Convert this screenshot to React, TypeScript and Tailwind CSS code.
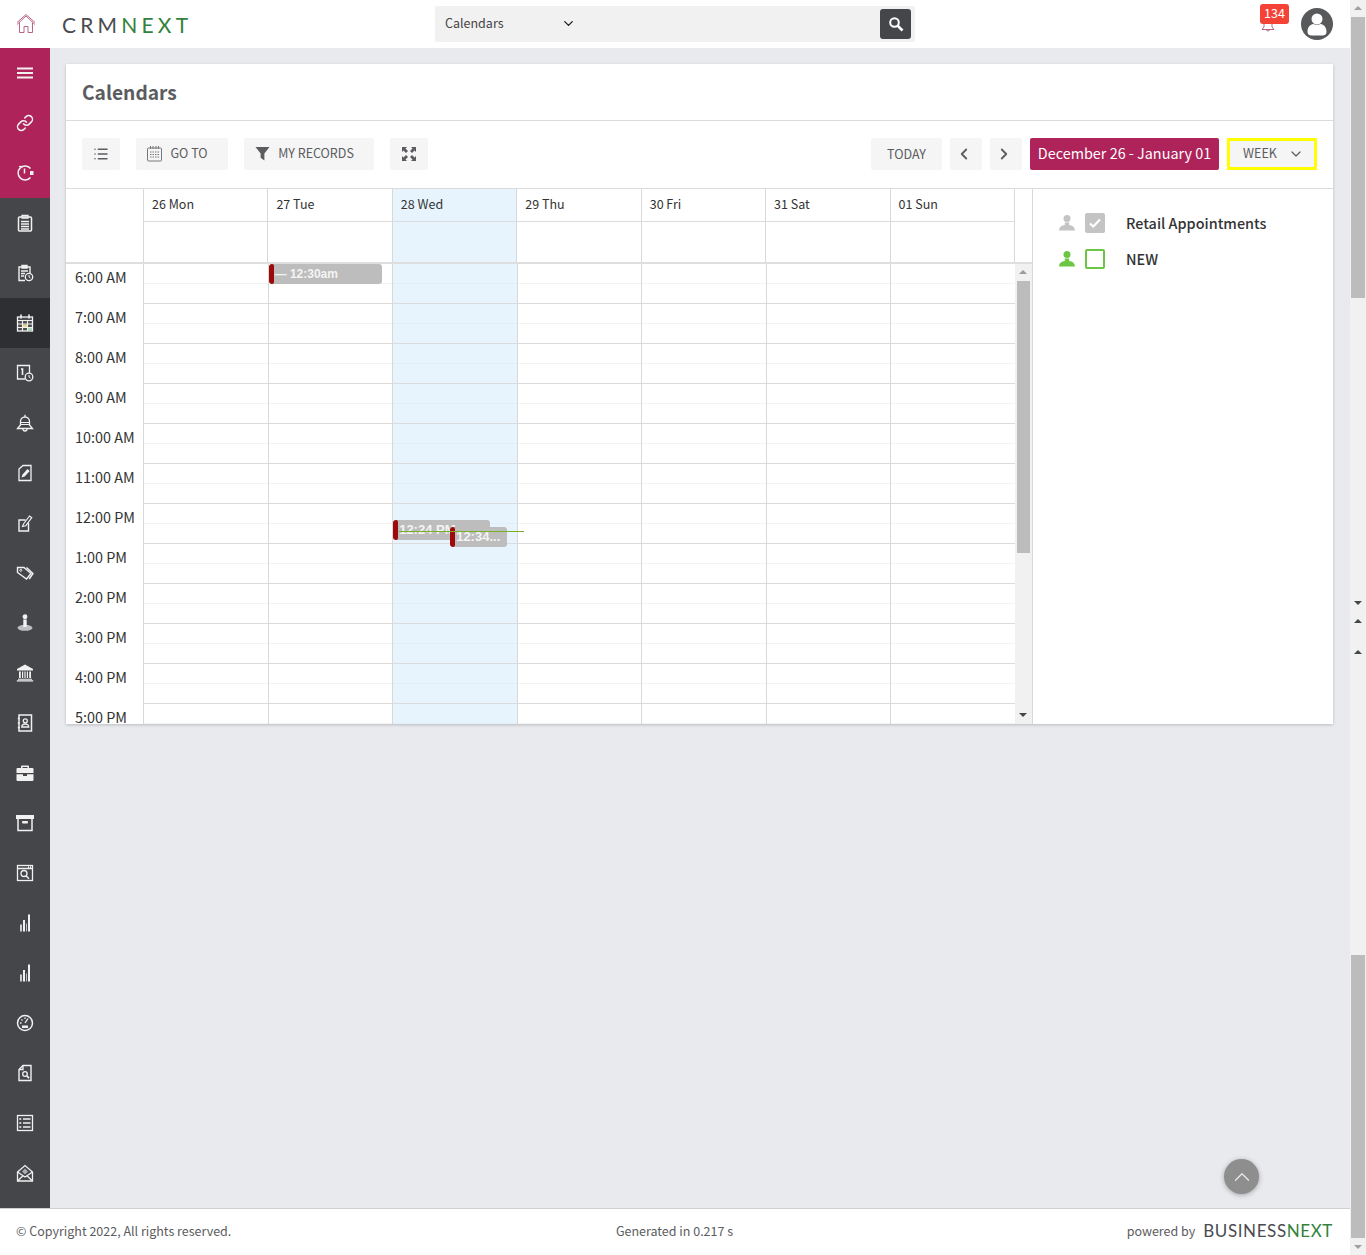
import { ChevronDown, ChevronLeft, ChevronRight, ChevronUp, Link, List } from 'lucide-react';
import type { ReactNode } from 'react';

const DAYS = ['26 Mon', '27 Tue', '28 Wed', '29 Thu', '30 Fri', '31 Sat', '01 Sun'];
const HOURS = ['6:00 AM', '7:00 AM', '8:00 AM', '9:00 AM', '10:00 AM', '11:00 AM', '12:00 PM', '1:00 PM', '2:00 PM', '3:00 PM', '4:00 PM', '5:00 PM'];

function Svg({ children, size = 18 }: { children: ReactNode; size?: number }) {
  return (
    <svg width={size} height={size} viewBox="0 0 18 18" fill="none" stroke="currentColor" strokeWidth="1.3">
      {children}
    </svg>
  );
}

function Hamburger() {
  return (
    <Svg>
      <path d="M1 4.500h16M1 9h16M1 13.500h16" strokeWidth="2" />
    </Svg>
  );
}

function Stopwatch() {
  return (
    <Svg>
      <path d="M14.500 4.500a7 7 0 1 0 0 9" strokeWidth="1.500" />
      <path d="M8.500 4.500v5" strokeWidth="1.500" />
      <path d="M3 2.500h4" strokeWidth="1.200" />
      <rect x="14" y="7" width="3.500" height="4" fill="currentColor" stroke="none" />
    </Svg>
  );
}

function Clipboard() {
  return (
    <Svg>
      <rect x="2.500" y="3" width="13" height="14" rx="1" strokeWidth="1.500" />
      <path d="M6 1.500h6v2.500H6zM5 7.500h8M5 10h8M5 12.500h8M5 15h8" />
    </Svg>
  );
}

function ClipboardClock() {
  return (
    <Svg>
      <path d="M9 16.500H3V3h11v6M6 1.500h5V4H6zM5 7h7M5 9.500h4M5 12h3" strokeWidth="1.400" />
      <circle cx="13" cy="13" r="3.700" />
      <path d="M13 11v2l1.500 1" strokeWidth="1" />
    </Svg>
  );
}

function CalendarGrid() {
  return (
    <Svg>
      <rect x="1.500" y="3" width="15" height="14" fill="currentColor" fillOpacity="0.15" />
      <path d="M5 .5v4M13 .5v4" strokeWidth="1.600" />
      <path d="M1.500 6.500h15M1.500 10h15M1.500 13.500h15M6.500 6.500V17M11.500 6.500V17" strokeWidth="1.100" />
      <rect x="7" y="10.500" width="4" height="2.500" fill="#e8d98a" stroke="none" />
      <rect x="12" y="14" width="4" height="2.500" fill="#a8d8c0" stroke="none" />
    </Svg>
  );
}

function CalendarClock() {
  return (
    <Svg>
      <path d="M9 15H1.500V1.500h12V9" />
      <path d="M5 5h1.500v6" strokeWidth="1.600" />
      <circle cx="13" cy="13" r="3.800" />
      <path d="M13 11v2l1.500 1" strokeWidth="1" />
    </Svg>
  );
}

function BandBell() {
  return (
    <Svg>
      <path d="M9 .8v1.700M4.500 11V7.500a4.500 4.500 0 0 1 9 0V11l3 3.500h-15z" strokeWidth="1.300" />
      <path d="M4.500 8.500h9M4.500 10.500h9" strokeWidth="1" />
      <path d="M7 15a2 2 0 0 0 4 0" />
    </Svg>
  );
}

function DocPencil() {
  return (
    <Svg>
      <path d="M3 5L7 1.500h8v15H3z" strokeWidth="1.300" />
      <path d="M5.500 13.500l1-3 5-5.500 2.200 2-5 5.500z" fill="currentColor" stroke="none" />
    </Svg>
  );
}

function BoxPencil() {
  return (
    <Svg>
      <path d="M12.500 9v8H3V6h6.500" strokeWidth="1.400" />
      <path d="M6.500 12.500l1-2.500 6-8 2.300 1.700-6 8z" strokeWidth="1.100" />
    </Svg>
  );
}

function TagPair() {
  return (
    <Svg>
      <path d="M1.500 3.500h6.500l7 6-4.500 5.500-9-6.500z" strokeWidth="1.400" />
      <path d="M10.500 3.500l6.500 6-3.800 5.500" strokeWidth="1.400" />
      <circle cx="4.800" cy="6.300" r="1" strokeWidth="1" />
    </Svg>
  );
}

function PersonBase() {
  return (
    <Svg>
      <circle cx="9" cy="2.800" r="1.800" fill="currentColor" />
      <path d="M7.300 5.500h3.400v7.500H7.300z" fill="currentColor" stroke="none" />
      <ellipse cx="9" cy="13.800" rx="7.500" ry="3" fill="currentColor" fillOpacity="0.7" stroke="none" />
    </Svg>
  );
}

function Bank() {
  return (
    <svg width="18" height="18" viewBox="0 0 18 18" fill="currentColor">
      <path d="M9 .5l8 4.500v1.500H1V5z" />
      <path d="M3 7.500h1.800v6.500H3zM6 7.500h1.200v6.500H6zM8.400 7.500h1.200v6.500H8.400zM10.800 7.500H12v6.500h-1.200zM13.200 7.500H15v6.500h-1.800z" />
      <path d="M2 14.800h14v1H2zM.8 16.300h16.400v1.200H.8z" />
    </svg>
  );
}

function ContactBook() {
  return (
    <Svg>
      <rect x="3" y="1" width="12.500" height="16" strokeWidth="1.500" />
      <circle cx="9.300" cy="6.800" r="2" />
      <path d="M5.800 13c0-4 7-4 7 0zM1.800 4.500h2M1.800 9h2M1.800 13.500h2" />
    </Svg>
  );
}

function Case() {
  return (
    <svg width="18" height="18" viewBox="0 0 18 18" fill="currentColor">
      <path fillRule="evenodd" d="M6 1.500h6a1 1 0 0 1 1 1V4h3.500a1 1 0 0 1 1 1v4H.5V5a1 1 0 0 1 1-1H5V2.500a1 1 0 0 1 1-1zM6.500 3v1h5V3z" />
      <path d="M.5 10.200H7v1.800h4v-1.800h6.500V16a1 1 0 0 1-1 1h-15a1 1 0 0 1-1-1z" />
    </svg>
  );
}

function ArchiveBox() {
  return (
    <svg width="18" height="18" viewBox="0 0 18 18" fill="none" stroke="currentColor">
      <rect x=".5" y="1.500" width="17" height="3" fill="currentColor" />
      <path d="M2 4.500V16.500h14V4.500" strokeWidth="1.500" />
      <rect x="6" y="7" width="6" height="2.600" rx="1" fill="currentColor" stroke="none" />
    </svg>
  );
}

function SearchWindow() {
  return (
    <Svg>
      <rect x="1.500" y="1.500" width="15" height="15" />
      <path d="M1.500 4.500h15M12 3h1M14 3h1" />
      <circle cx="8" cy="9.500" r="3" />
      <path d="M10 11.800l3 3" strokeWidth="1.500" />
    </Svg>
  );
}

function Bars() {
  return (
    <svg width="18" height="18" viewBox="0 0 18 18" fill="currentColor">
      <rect x="4" y="10.500" width="2" height="7" fillOpacity="0.8" />
      <rect x="7" y="6" width="2" height="11.500" />
      <rect x="10" y="9.500" width="1" height="8" fillOpacity="0.7" />
      <rect x="12" y=".5" width="2" height="17" />
    </svg>
  );
}

function Dial() {
  return (
    <Svg>
      <circle cx="9" cy="9" r="7.500" strokeWidth="1.500" />
      <path d="M9 9l3-4.500M4 9h1.500M5.500 5.500l1 1M9 3.500v1.500" />
      <rect x="6" y="11.500" width="6" height="2.500" fill="currentColor" stroke="none" />
    </Svg>
  );
}

function FileLens() {
  return (
    <Svg>
      <path d="M3 5.500L7 1.500h8v15H3z" strokeWidth="1.400" />
      <path d="M7 1.500v4H3" />
      <circle cx="9" cy="10" r="2.300" strokeWidth="1.300" />
      <path d="M10.800 11.800l2.300 2.300" strokeWidth="1.700" />
    </Svg>
  );
}

function Checklist() {
  return (
    <Svg>
      <rect x="1.500" y="1.500" width="15" height="15" />
      <path d="M7 5h7.500M7 9h7.500M7 13h7.500M3.300 5h2M3.300 9h2M3.300 13h2" strokeWidth="1.600" />
    </Svg>
  );
}

function MailOpen() {
  return (
    <Svg>
      <path d="M1.500 8L9 1.500 16.500 8v9h-15z" strokeWidth="1.300" />
      <path d="M1.500 8L9 13l7.500-5M1.500 17L7 11.800M16.500 17L11 11.800" />
      <path d="M9 4.500l3 3-3 3-3-3z" fill="currentColor" fillOpacity="0.6" stroke="none" />
    </Svg>
  );
}

function PersonGlyph({ className }: { className: string }) {
  return (
    <svg className={className} width="18" height="18" viewBox="0 0 18 18" fill="currentColor">
      <circle cx="9" cy="4.500" r="3.500" />
      <path d="M6.800 8.500h4.400v2.500c3 .5 5.500 1.800 5.800 5.500H1c.3-3.700 2.800-5 5.800-5.500z" />
    </svg>
  );
}

const NAV: { icon: ReactNode; tone: 'pink' | 'dark' | 'active' }[] = [
  { icon: <Hamburger />, tone: 'pink' },
  { icon: <Link size={18} strokeWidth={2} />, tone: 'pink' },
  { icon: <Stopwatch />, tone: 'pink' },
  { icon: <Clipboard />, tone: 'dark' },
  { icon: <ClipboardClock />, tone: 'dark' },
  { icon: <CalendarGrid />, tone: 'active' },
  { icon: <CalendarClock />, tone: 'dark' },
  { icon: <BandBell />, tone: 'dark' },
  { icon: <DocPencil />, tone: 'dark' },
  { icon: <BoxPencil />, tone: 'dark' },
  { icon: <TagPair />, tone: 'dark' },
  { icon: <PersonBase />, tone: 'dark' },
  { icon: <Bank />, tone: 'dark' },
  { icon: <ContactBook />, tone: 'dark' },
  { icon: <Case />, tone: 'dark' },
  { icon: <ArchiveBox />, tone: 'dark' },
  { icon: <SearchWindow />, tone: 'dark' },
  { icon: <Bars />, tone: 'dark' },
  { icon: <Bars />, tone: 'dark' },
  { icon: <Dial />, tone: 'dark' },
  { icon: <FileLens />, tone: 'dark' },
  { icon: <Checklist />, tone: 'dark' },
  { icon: <MailOpen />, tone: 'dark' },
];

function Sidebar() {
  return (
    <aside className="w-[50px] shrink-0 bg-[#45464a] text-[#f1f1f1]">
      {NAV.map((item, i) => (
        <div
          key={i}
          className={
            'flex h-[50px] items-center justify-center ' +
            (item.tone === 'pink' ? 'bg-[#ae2359]' : item.tone === 'active' ? 'bg-[#2e2f33]' : 'bg-[#45464a]')
          }
        >
          {item.icon}
        </div>
      ))}
    </aside>
  );
}

function Header() {
  return (
    <header className="flex h-[48px] shrink-0 items-center bg-white">
      <svg className="ml-4" width="20" height="20" viewBox="0 0 20 20" fill="none" stroke="#b0567d" strokeWidth="0.900">
        <path d="M1 10.500L10 2l9 8.500M3.500 8.500V18.500h4.500v-6h4v6h4.500V8.500M1 8.500L10 .5l9 8" />
      </svg>
      <div className="ml-[26px] w-[130px] whitespace-nowrap font-['Lato'] text-[21px] leading-none tracking-[0.2em] text-[#4a4b4f]">
        CRM<span className="text-[#33823c]">NEXT</span>
      </div>
      <div className="ml-[243px] flex h-[36px] w-[480px] items-center rounded-[2px] bg-[#f1f1f1] pr-1">
        <div className="flex w-[146px] items-center justify-between pb-[2px] pl-[10px] pr-[5px] text-[12.5px] text-[#444]">
          Calendars
          <ChevronDown size={15} strokeWidth={2.2} className="text-[#222]" />
        </div>
        <div className="flex-1" />
        <div className="flex h-[30px] w-[31px] items-center justify-center rounded-[3px] bg-[#45464a]">
          <svg width="16" height="16" viewBox="0 0 16 16" fill="none" stroke="#fff">
            <circle cx="6.500" cy="6.500" r="4.300" strokeWidth="2" />
            <path d="M9.800 9.800l4.700 4.700" strokeWidth="2.600" />
          </svg>
        </div>
      </div>
      <div className="relative ml-[345px] flex h-[40px] w-[30px] items-center justify-center">
        <svg className="mt-[4px] -ml-[14px]" width="14" height="14" viewBox="0 0 14 14" fill="none" stroke="#a5426b" strokeWidth="0.800">
          <path d="M3 8V5a4 4 0 0 1 8 0v3l2 2.500H1zM5.500 10.500a1.500 1.500 0 0 0 3 0" />
        </svg>
        <div className="absolute left-0 top-0 flex h-[20px] w-[29px] items-center justify-center rounded-[3px] bg-[#f44336] pb-px text-[12.5px] text-white">
          134
        </div>
      </div>
      <div className="ml-[11px] flex h-[32px] w-[32px] items-center justify-center overflow-hidden rounded-full bg-[#58595b]">
        <svg width="32" height="32" viewBox="0 0 32 32" fill="#fff">
          <circle cx="16" cy="11" r="5.500" />
          <path d="M6.500 24c0-5 2.500-7.500 6-8 2 1.300 5 1.300 7 0 3.500.5 6 3 6 8 0 2.500-2 3.500-4 3.500H10.500c-2 0-4-1-4-3.500z" />
        </svg>
      </div>
    </header>
  );
}

function ToolButton({ className, children }: { className: string; children: ReactNode }) {
  return (
    <div className={'flex h-[32px] items-center justify-center rounded-[2px] bg-[#f5f5f5] text-[12.5px] text-[#5b5c60] ' + className}>
      {children}
    </div>
  );
}

function Toolbar() {
  return (
    <div className="flex h-[68px] items-center border-b border-[#dcdcdc] px-4 pb-[2px]">
      <ToolButton className="w-[38px]">
        <List size={16} strokeWidth={2.2} />
      </ToolButton>
      <ToolButton className="ml-4 w-[92px] gap-2 pr-[9px]">
        <svg width="15" height="16" viewBox="0 0 15 16" fill="none" stroke="#77787b" strokeWidth="1">
          <rect x=".5" y="2" width="14" height="13" rx="1" />
          <path d="M3.500 0v3M6 0v3M9 0v3M11.500 0v3" />
          <path d="M3 6h9M3 8.500h9M3 11h9" strokeWidth="1.200" strokeDasharray="1.500 1" />
        </svg>
        <span>GO TO</span>
      </ToolButton>
      <ToolButton className="ml-4 w-[130px] gap-2 pr-[9px]">
        <svg width="15" height="15" viewBox="0 0 16 16" fill="#5b5c60">
          <path d="M.5 1h15L10 8v7.500l-4-3V8z" />
        </svg>
        <span>MY RECORDS</span>
      </ToolButton>
      <ToolButton className="ml-4 w-[38px]">
        <svg width="14" height="14" viewBox="0 0 14 14" fill="#5b5c60">
          <path d="M0 0h5L3.500 1.500 6 4 4 6 1.500 3.500 0 5zM14 0v5l-1.500-1.500L10 6 8 4l2.500-2.500L9 0zM0 14V9l1.500 1.500L4 8l2 2-2.500 2.500L5 14zM14 14H9l1.500-1.500L8 10l2-2 2.500 2.500L14 9z" />
        </svg>
      </ToolButton>
      <div className="flex-1" />
      <ToolButton className="w-[71px] pt-px">TODAY</ToolButton>
      <ToolButton className="ml-2 w-[32px] pr-[4px]">
        <ChevronLeft size={18} strokeWidth={2.4} />
      </ToolButton>
      <ToolButton className="ml-2 w-[32px] pr-[4px]">
        <ChevronRight size={18} strokeWidth={2.4} />
      </ToolButton>
      <div className="ml-2 flex h-[32px] w-[189px] items-center justify-center rounded-[2px] bg-[#ae2359] pb-[2px] text-[14.4px] text-white">
        December 26 - January 01
      </div>
      <div className="ml-2 flex h-[32px] w-[90px] items-center justify-center gap-[11px] border-[3px] border-[#ffff00] bg-[#f5f5f5] pl-[3px] text-[12.5px] text-[#5b5c60]">
        <span>WEEK</span>
        <ChevronDown size={16} strokeWidth={1.8} />
      </div>
    </div>
  );
}

function CalEvent({ label, className }: { label: string; className: string }) {
  return (
    <div className={"absolute z-10 flex h-[20px] items-center overflow-hidden rounded-[3px] bg-[#bdbdbd] font-['Liberation_Sans'] font-bold text-[#f4f4f4] " + className}>
      <span className="mr-[1px] h-full w-[5px] shrink-0 rounded-[2px] bg-[#9c0a0a]" />
      <span className="whitespace-nowrap">{label}</span>
    </div>
  );
}

function DayColumn({ index }: { index: number }) {
  const today = index === 2;
  return (
    <div className={'relative flex-1 border-l border-[#d8d8d8] ' + (today ? 'bg-[#e8f4fd]' : 'bg-white')}>
      {HOURS.map((h) => (
        <div key={h} className="h-[40px] border-b border-[#dcdcdc]">
          <div className={'h-[20px] border-b ' + (today ? 'border-[#e3eff8]' : 'border-[#f3f3f3]')} />
        </div>
      ))}
      {index === 1 && <CalEvent label="— 12:30am" className="left-0 top-0 w-[113px] text-[12px]" />}
      {today && (
        <>
          <CalEvent label="12:24 PM" className="left-0 top-[256px] w-[97px] text-[13px]" />
          <CalEvent label="12:34..." className="left-[57px] top-[263px] w-[57px] text-[13px]" />
          <div className="absolute left-[6px] top-[267px] z-20 h-px w-[125px] bg-[#78b02a]" />
        </>
      )}
    </div>
  );
}

function CalendarGridView() {
  return (
    <div className="flex w-[967px] flex-col border-r border-[#d8d8d8]">
      <div className="flex h-[75px] shrink-0 border-b-[2px] border-[#dedede]">
        <div className="w-[77px]" />
        <div className="flex w-[871px]">
          {DAYS.map((d, i) => (
            <div key={d} className={'flex-1 border-l border-[#d8d8d8] ' + (i === 2 ? 'bg-[#e8f4fd]' : '')}>
              <div className="flex h-[33px] items-center border-b border-[#dcdcdc] pb-[2px] pl-2 text-[12.5px] text-[#333]">{d}</div>
            </div>
          ))}
        </div>
        <div className="flex-1 border-l border-[#d8d8d8]" />
      </div>
      <div className="flex h-[460px] overflow-hidden">
        <div className="w-[77px] shrink-0">
          {HOURS.map((h) => (
            <div key={h} className="h-[40px] pl-[9px] pt-[3px] text-[14.4px] leading-[20px] text-[#333]">
              {h}
            </div>
          ))}
        </div>
        <div className="flex w-[872px] shrink-0 overflow-hidden">
          {DAYS.map((d, i) => (
            <DayColumn key={d} index={i} />
          ))}
        </div>
        <div className="flex flex-1 flex-col items-center bg-[#f1f1f1] pr-[1px]">
          <span className="mt-[6px] h-0 w-0 border-x-[4px] border-b-[4px] border-x-transparent border-b-[#9a9a9a]" />
          <span className="mt-[7px] h-[272px] w-[13px] bg-[#bcbcbc]" />
          <span className="mt-[160px] h-0 w-0 border-x-[4px] border-t-[4px] border-x-transparent border-t-[#45464a]" />
        </div>
      </div>
    </div>
  );
}

function Legend() {
  return (
    <div className="flex-1 pl-[25px] pt-[24px] text-[14.4px] font-medium text-[#333]">
      <div className="flex h-[20px] items-center">
        <PersonGlyph className="text-[#c4c4c4]" />
        <span className="ml-[9px] flex h-[20px] w-[20px] items-center justify-center rounded-[2px] bg-[#c4c4c4] text-white">
          <svg width="14" height="14" viewBox="0 0 14 14" fill="none" stroke="#fff" strokeWidth="2.200">
            <path d="M2 7.500l3.300 3L12 3.500" />
          </svg>
        </span>
        <span className="ml-[21px]">Retail Appointments</span>
      </div>
      <div className="mt-[16px] flex h-[20px] items-center">
        <PersonGlyph className="text-[#6cc644]" />
        <span className="ml-[9px] h-[20px] w-[20px] rounded-[2px] border-2 border-[#6cc644]" />
        <span className="ml-[21px]">NEW</span>
      </div>
    </div>
  );
}

function Footer() {
  return (
    <footer className="flex h-[47px] items-center justify-between border-t border-[#d0d0d0] bg-white pb-[2px] pl-4 pr-[17px] text-[12.5px] text-[#5b5c60]">
      <span className="w-[420px]">© Copyright 2022, All rights reserved.</span>
      <span className="pt-px">Generated in 0.217 s</span>
      <span className="flex w-[420px] items-center justify-end">
        powered by
        <span className="ml-[8px] font-['Lato'] text-[17px] tracking-[0.035em] text-[#4a4b4f]">
          BUSINESS<span className="text-[#33823c]">NEXT</span>
        </span>
      </span>
    </footer>
  );
}

function PageScrollbar() {
  return (
    <div className="flex w-[16px] shrink-0 flex-col items-center bg-[#f1f1f1]">
      <span className="mt-[6px] h-0 w-0 border-x-[4px] border-b-[4px] border-x-transparent border-b-[#a0a0a0]" />
      <span className="mt-[7px] h-[281px] w-[14px] bg-[#bcbcbc]" />
      <span className="mt-[303px] h-0 w-0 border-x-[4px] border-t-[4px] border-x-transparent border-t-[#45464a]" />
      <span className="mt-[14px] h-0 w-0 border-x-[4px] border-b-[4px] border-x-transparent border-b-[#45464a]" />
      <span className="mt-[27px] h-0 w-0 border-x-[4px] border-b-[4px] border-x-transparent border-b-[#45464a]" />
      <span className="mt-[301px] h-[283px] w-[14px] bg-[#bcbcbc]" />
      <span className="mt-[7px] h-0 w-0 border-x-[4px] border-t-[4px] border-x-transparent border-t-[#a0a0a0]" />
    </div>
  );
}

export default function App() {
  return (
    <div className="flex h-[1255px] w-[1366px] overflow-hidden bg-[#e9eaee] font-['Noto_Sans_CJK_SC','Noto_Sans',sans-serif]">
      <div className="flex w-[1350px] flex-col">
        <Header />
        <div className="relative flex flex-1">
          <Sidebar />
          <main className="flex-1 px-4 pt-4">
            <section className="h-[660px] w-[1267px] bg-white shadow-[0_1px_3px_rgba(0,0,0,0.2)]">
              <div className="flex h-[57px] items-center border-b border-[#dcdcdc] px-4 text-[19.2px] font-bold text-[#5b5c60]">
                Calendars
              </div>
              <Toolbar />
              <div className="flex h-[535px]">
                <CalendarGridView />
                <Legend />
              </div>
            </section>
          </main>
          <div className="absolute bottom-[14px] left-[1224px] flex h-[35px] w-[35px] items-center justify-center rounded-full bg-[#8e8e8e] text-[#e8e8e8] shadow-[0_1px_5px_rgba(0,0,0,0.3)]">
            <ChevronUp size={26} strokeWidth={1.2} />
          </div>
        </div>
        <Footer />
      </div>
      <PageScrollbar />
    </div>
  );
}
